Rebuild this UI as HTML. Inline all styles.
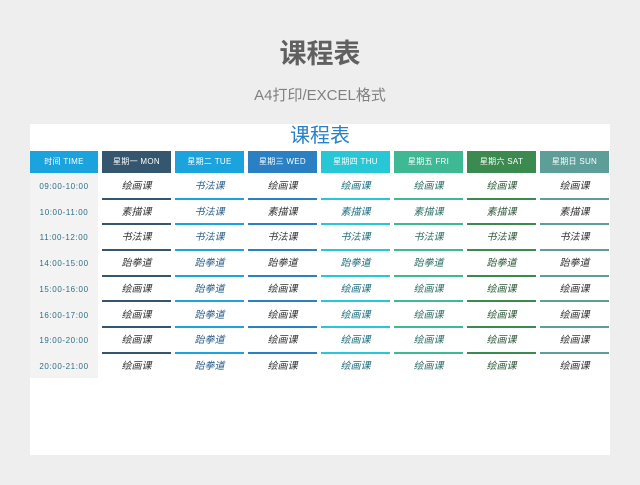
<!DOCTYPE html>
<html><head><meta charset="utf-8"><style>
*{margin:0;padding:0;box-sizing:border-box}
body{width:640px;height:485px;background:#eeeeee;font-family:"Liberation Sans","Noto Sans CJK SC",sans-serif;position:relative;overflow:hidden}
.t1{position:absolute;left:0;width:640px;top:37px;text-align:center;font-size:27px;font-weight:bold;color:#606060;line-height:34px}
.t2{position:absolute;left:0;width:640px;top:86px;text-align:center;font-size:15px;color:#808080;line-height:20px}
.card{position:absolute;left:30px;top:124px;width:580px;height:331px;background:#fff}
.it{position:absolute;left:0;width:580px;top:0;text-align:center;font-size:20px;color:#2a80c6;line-height:24px}
.h{position:absolute;top:27px;height:22px;color:#fff;font-size:8px;text-align:center;line-height:22px;font-weight:normal;font-family:"Liberation Sans","Noto Sans CJK SC",sans-serif;letter-spacing:0.3px}
.tc{position:absolute;left:0;top:49px;width:68px;height:205px;background:#f3f3f3}
.tm{position:absolute;left:0;width:68px;font-size:8px;color:#2d6f86;text-align:center;font-family:"Liberation Sans",sans-serif;letter-spacing:0.6px;font-weight:normal}
.c{position:absolute;width:69px;text-align:center;font-size:10px;font-style:italic;color:#333;height:25.7px;line-height:25px}
.c.u{border-bottom:2px solid}
</style></head><body>
<div class="t1">课程表</div>
<div class="t2">A4打印/EXCEL格式</div>
<div class="card">
<div class="it">课程表</div>
<div class="h" style="left:0;width:68px;background:#1ba3dd">时间 TIME</div>
<div class="tc"></div>
<div id="g"></div>
</div>
<script>
var cols=[["星期一 MON","#34566e","#333"],["星期二 TUE","#1ba3dd","#2a5f8a"],["星期三 WED","#2b80c3","#333"],["星期四 THU","#27c7d6","#1f6f80"],["星期五 FRI","#3fb994","#2d6f66"],["星期六 SAT","#3b8a4f","#2d5a3a"],["星期日 SUN","#5e9e98","#333"]];
var times=["09:00-10:00","10:00-11:00","11:00-12:00","14:00-15:00","15:00-16:00","16:00-17:00","19:00-20:00","20:00-21:00"];
var rows=[["绘画课","书法课","绘画课","绘画课","绘画课","绘画课","绘画课"],["素描课","书法课","素描课","素描课","素描课","素描课","素描课"],["书法课","书法课","书法课","书法课","书法课","书法课","书法课"],["跆拳道","跆拳道","跆拳道","跆拳道","跆拳道","跆拳道","跆拳道"],["绘画课","跆拳道","绘画课","绘画课","绘画课","绘画课","绘画课"],["绘画课","跆拳道","绘画课","绘画课","绘画课","绘画课","绘画课"],["绘画课","跆拳道","绘画课","绘画课","绘画课","绘画课","绘画课"],["绘画课","跆拳道","绘画课","绘画课","绘画课","绘画课","绘画课"]];
var h="";
cols.forEach(function(c,i){var x=72+i*73;h+='<div class="h" style="left:'+x+'px;width:69px;background:'+c[1]+'">'+c[0]+'</div>';});
times.forEach(function(t,r){var y=50+r*25.7;h+='<div class="tm" style="top:'+y+'px;line-height:25px">'+t+'</div>';
rows[r].forEach(function(s,i){var x=72+i*73;h+='<div class="c'+(r<7?' u':'')+'" style="left:'+x+'px;top:'+y+'px;color:'+cols[i][2]+';border-color:'+cols[i][1]+'">'+s+'</div>';});});
document.getElementById("g").innerHTML=h;
</script>
</body></html>
